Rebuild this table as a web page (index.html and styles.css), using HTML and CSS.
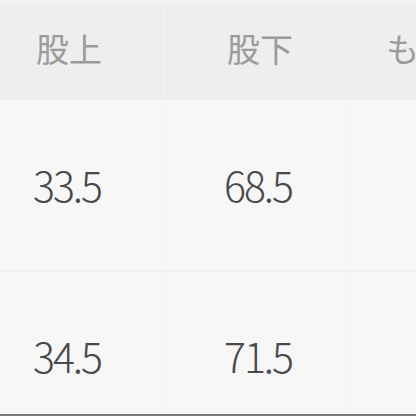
FILE: index.html
```html
<!DOCTYPE html>
<html lang="ja">
<head>
<meta charset="utf-8">
<link rel="stylesheet" href="styles.css">
</head>
<body>
<div class="table">
  <div class="row head">
    <div class="cell c1">股上</div>
    <div class="cell c2">股下</div>
    <div class="cell c3">もも周り</div>
  </div>
  <div class="row r1">
    <div class="cell c1 num">33.5</div>
    <div class="cell c2 num">68.5</div>
    <div class="cell c3 num"></div>
  </div>
  <div class="row r2">
    <div class="cell c1 num">34.5</div>
    <div class="cell c2 num">71.5</div>
    <div class="cell c3 num"></div>
  </div>
</div>
</body>
</html>
```

FILE: styles.css
```css
html, body {
  margin: 0;
  padding: 0;
  background: #f7f7f7;
  overflow: hidden;
}
.table {
  width: 416px;
  height: 416px;
  display: flex;
  flex-direction: column;
  font-family: "Noto Sans CJK JP", "Noto Sans", sans-serif;
  border-bottom: 2px solid #7a7a7a;
  box-sizing: border-box;
}
.row {
  display: grid;
  grid-template-columns: 165px 181px 1fr;
  white-space: nowrap;
}
.head {
  height: 100px;
  background: #eeeeee;
  border-top: 4px solid #f3f3f3;
  box-sizing: border-box;
}
.r1 {
  height: 170px;
  border-bottom: 2px solid #efefef;
}
.r2 {
  flex: 1;
}
.cell {
  display: flex;
  align-items: center;
  overflow: hidden;
  border-right: 1px solid #f4f4f4;
}
.head .cell {
  font-size: 33px;
  color: #9b9b9b;
  padding-bottom: 8px;
  border-right-color: #f3f3f3;
}
.c1 { padding-left: 36px; }
.c2 { padding-left: 62px; }
.c3 { padding-left: 40px; border-right: none; }
.num {
  font-size: 41px;
  font-weight: 300;
  color: #4a4a4a;
  letter-spacing: -2px;
}
.num.c1 { padding-left: 33px; }
.num.c2 { padding-left: 59px; }
.r1 .num { padding-bottom: 2px; }
.r2 .num { padding-top: 24px; }
```
